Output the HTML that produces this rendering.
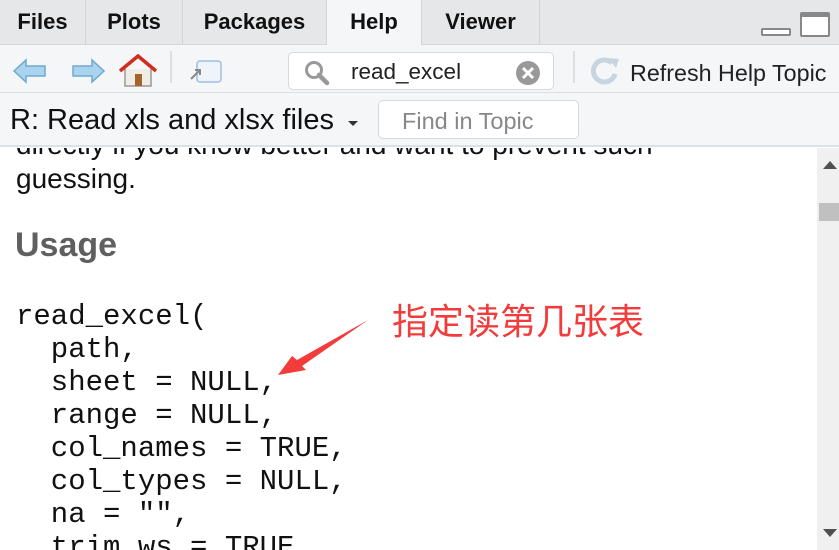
<!DOCTYPE html>
<html><head><meta charset="utf-8"><style>
*{margin:0;padding:0;box-sizing:border-box}
body{width:839px;height:550px;overflow:hidden;background:#fff;font-family:"Liberation Sans",sans-serif;position:relative}
.tabs{position:absolute;left:0;top:0;width:839px;height:45px;background:#e6e7e8;border-bottom:1px solid #d4d6d8}
.tab{position:absolute;top:0;height:45px;font-weight:bold;font-size:22px;line-height:44px;text-align:center;border-right:1px solid #d2d4d6;color:#111}
.tb{position:absolute;left:0;top:45px;width:839px;height:48px;background:#f4f6f8;border-bottom:1px solid #dde0e3}
.row2{position:absolute;left:0;top:93px;width:839px;height:54px;background:#f4f6f8;border-bottom:2px solid #dde1e5}
.box{position:absolute;background:#fff;border:1px solid #d6d9dc;border-radius:5px}
.content{position:absolute;left:0;top:148px;width:817px;height:402px;overflow:hidden}
.code{position:absolute;left:16px;font-family:"Liberation Mono",monospace;font-size:29px;line-height:33px;white-space:pre;color:#111}
</style></head><body>
<div class="tabs">
<div class="tab" style="left:0;width:86px">Files</div>
<div class="tab" style="left:86px;width:97px">Plots</div>
<div class="tab" style="left:183px;width:144px">Packages</div>
<div class="tab" style="left:327px;width:95px;background:#f4f6f8;height:46px">Help</div>
<div class="tab" style="left:422px;width:118px">Viewer</div>
<div style="position:absolute;left:761px;top:28px;width:30px;height:8px;border:2px solid #888;border-radius:2px;background:#fff"></div>
<div style="position:absolute;left:800px;top:12px;width:30px;height:25px;border:2px solid #888;border-top-width:5px;border-radius:2px;background:#fff"></div>
</div>
<div class="tb">
<svg style="position:absolute;left:12px;top:13px" width="36" height="26"><path d="M2 13 L14 2 L14 8 L33 8 L33 18 L14 18 L14 24 Z" fill="#a9d3ee" stroke="#6fa9d0" stroke-width="1.5"/></svg>
<svg style="position:absolute;left:70px;top:13px" width="36" height="26"><path d="M34 13 L22 2 L22 8 L3 8 L3 18 L22 18 L22 24 Z" fill="#a9d3ee" stroke="#6fa9d0" stroke-width="1.5"/></svg>
<svg style="position:absolute;left:118px;top:9px" width="40" height="34"><path d="M7 15 L7 32 L33 32 L33 15" fill="#f0ede6" stroke="#999" stroke-width="1.5"/><rect x="17" y="20" width="7" height="12" fill="#a5642a"/><path d="M2 17 L20 2 L38 17" fill="none" stroke="#d12c1c" stroke-width="3.5"/></svg>
<div style="position:absolute;left:170px;top:6px;width:2px;height:32px;background:#dde0e3"></div>
<svg style="position:absolute;left:188px;top:14px" width="36" height="26"><rect x="9" y="2" width="24" height="21" rx="3" fill="#eef4fa" stroke="#9cbfe0" stroke-width="1.5"/><path d="M3 20 L12 11 M7 11 L12 11 L12 16" stroke="#888" stroke-width="2" fill="none"/></svg>
<div class="box" style="left:288px;top:7px;width:266px;height:38px">
<svg style="position:absolute;left:14px;top:7px" width="28" height="26"><circle cx="11" cy="10" r="7.5" fill="none" stroke="#999" stroke-width="3"/><path d="M16 15 L24 23" stroke="#999" stroke-width="4.5" stroke-linecap="round"/></svg>
<span style="position:absolute;left:62px;top:6px;font-size:22.5px;color:#222">read_excel</span>
<svg style="position:absolute;left:226px;top:7px" width="26" height="26"><circle cx="13" cy="13" r="12" fill="#999"/><path d="M8 8 L18 18 M18 8 L8 18" stroke="#fff" stroke-width="3"/></svg>
</div>
<div style="position:absolute;left:573px;top:6px;width:2px;height:32px;background:#dde0e3"></div>
<svg style="position:absolute;left:588px;top:9px" width="34" height="34"><path d="M24 9 A11 11 0 1 0 27 20" fill="none" stroke="#c7d4e2" stroke-width="5"/><path d="M20 4 L31 5 L28 14 Z" fill="#c7d4e2"/></svg>
<span style="position:absolute;left:630px;top:15px;font-size:23.3px;color:#222">Refresh Help Topic</span>
</div>
<div class="row2">
<span style="position:absolute;left:10px;top:11px;font-size:29px;color:#111">R: Read xls and xlsx files</span>
<svg style="position:absolute;left:347px;top:27px" width="12" height="8"><path d="M1 1 L11 1 L6 6 Z" fill="#333"/></svg>
<div class="box" style="left:378px;top:7px;width:201px;height:39px"><span style="position:absolute;left:23px;top:7px;font-size:23.5px;color:#888">Find in Topic</span></div>
</div>
<div class="content">
<div style="position:absolute;left:16px;top:-20px;font-size:28px;color:#111;line-height:34px;white-space:nowrap">directly if you know better and want to prevent such<br>guessing.</div>
<div style="position:absolute;left:15px;top:78px;font-size:34px;font-weight:bold;color:#5f5f5f">Usage</div>
<div class="code" style="top:152px">read_excel(
  path,
  sheet = NULL,
  range = NULL,
  col_names = TRUE,
  col_types = NULL,
  na = "",
  trim_ws = TRUE</div>
<div style="position:absolute;left:392px;top:147px;font-family:'Noto Sans CJK SC',sans-serif;font-size:36px;line-height:48px;color:#f23c3c">指定读第几张表</div>
<svg style="position:absolute;left:270px;top:170px" width="110" height="60"><path d="M98 2 L32 48 L36 52 L8 57 L22 38 L27 42 Z" fill="#f23c3c"/></svg>
</div>
<div style="position:absolute;left:817px;top:148px;width:22px;height:402px;background:#f0f0f0">
<svg style="position:absolute;left:6px;top:12px" width="14" height="10"><path d="M0 9 L7 1 L14 9 Z" fill="#505050"/></svg>
<div style="position:absolute;left:2px;top:55px;width:20px;height:18px;background:#c0c0c0"></div>
<svg style="position:absolute;left:6px;top:380px" width="14" height="10"><path d="M0 1 L14 1 L7 9 Z" fill="#505050"/></svg>
</div>
</body></html>
